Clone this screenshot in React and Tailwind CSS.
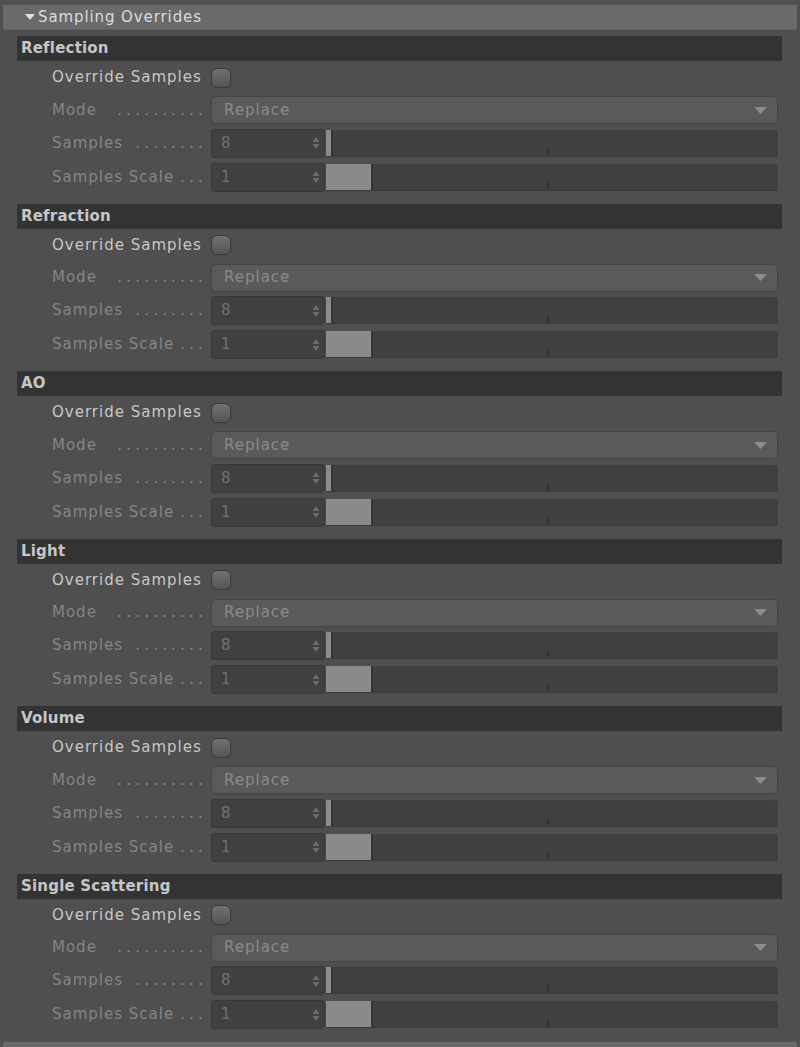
import React from "react";

const sections = ["Reflection", "Refraction", "AO", "Light", "Volume", "Single Scattering"];

function Spinner() {
  return (
    <svg width="8" height="16" viewBox="0 0 8 16" className="shrink-0">
      <path d="M4 2 L7.5 7 L0.5 7 Z" fill="#6c6c6c" />
      <path d="M4 14 L7.5 9 L0.5 9 Z" fill="#6c6c6c" />
    </svg>
  );
}

function Label({ text, dots }) {
  return (
    <div className="w-[159px] flex items-center justify-between text-[#858585] whitespace-nowrap pr-[4px]">
      <span>{text}</span>
      <span className="shrink-0 tracking-[4.2px]">{".".repeat(dots)}</span>
    </div>
  );
}

function NumberSlider({ value, thumbW }) {
  return (
    <div className="flex items-center w-[567px] h-[30px]">
      <div className="flex items-center justify-between w-[114px] h-[29px] bg-[#404040] border border-[#393939] rounded-[3px] pl-[9px] pr-[4px] text-[#707070]">
        <span>{value}</span>
        <Spinner />
      </div>
      <div className="relative flex-1 h-[27px] flex items-stretch bg-[#404040] rounded-r-[3px] border-b border-[#3a3a3a] ml-[1px]">
        <div className="bg-[#8a8a8a] border-r-2 border-[#353535]" style={{ width: thumbW }} />
        <div className="absolute left-[221px] bottom-[1px] w-[2px] h-[7px] bg-[#333333]" />
      </div>
    </div>
  );
}

function Section({ title }) {
  return (
    <div className="mb-[9.6px]">
      <div className="h-[25px] bg-[#333333] pl-[4px] flex items-center font-bold text-[#c6c6c6] tracking-[0.2px]">
        {title}
      </div>
      <div className="pl-[35px] pr-[4px]">
        <div className="h-[33px] flex items-center">
          <div className="w-[159px] text-[#c8c8c8]">Override Samples</div>
          <div className="w-[20px] h-[20px] rounded-[6px] border border-[#383838] bg-gradient-to-b from-[#707070] to-[#555555]" />
        </div>
        <div className="h-[32px] flex items-center">
          <Label text="Mode" dots={10} />
          <div className="w-[567px] h-[28px] rounded-[5px] bg-[#5a5a5a] border border-[#454545] flex items-center justify-between pl-[12px] pr-[10px] text-[#8a8a8a]">
            <span>Replace</span>
            <svg width="13" height="7" viewBox="0 0 13 7">
              <path d="M0 0 L13 0 L6.5 7 Z" fill="#8c8c8c" />
            </svg>
          </div>
        </div>
        <div className="h-[34px] flex items-center">
          <Label text="Samples" dots={8} />
          <NumberSlider value="8" thumbW={7} />
        </div>
        <div className="h-[34px] flex items-center">
          <Label text="Samples Scale" dots={3} />
          <NumberSlider value="1" thumbW={47} />
        </div>
      </div>
    </div>
  );
}

export default function App() {
  return (
    <div
      className="w-[800px] h-[1047px] bg-[#4f4f4f] pt-[5px] overflow-hidden text-[15px] leading-none tracking-[1px]"
      style={{ fontFamily: '"DejaVu Sans", "Open Sans", sans-serif' }}
    >
      <div className="mx-[3px] h-[25px] bg-[#6a6a6a] border-b border-[#606060] flex items-center pl-[22px] text-[#dcdcdc] tracking-[0.9px]">
        <svg width="10" height="6" viewBox="0 0 10 6" className="mr-[3px]">
          <path d="M0 0 L10 0 L5 6 Z" fill="#e0e0e0" />
        </svg>
        <span>Sampling Overrides</span>
      </div>
      <div className="pl-[17px] pr-[18px] pt-[6px]">
        {sections.map((s) => (
          <Section key={s} title={s} />
        ))}
      </div>
      <div className="mx-[3px] h-[10px] bg-[#6a6a6a]" />
    </div>
  );
}
